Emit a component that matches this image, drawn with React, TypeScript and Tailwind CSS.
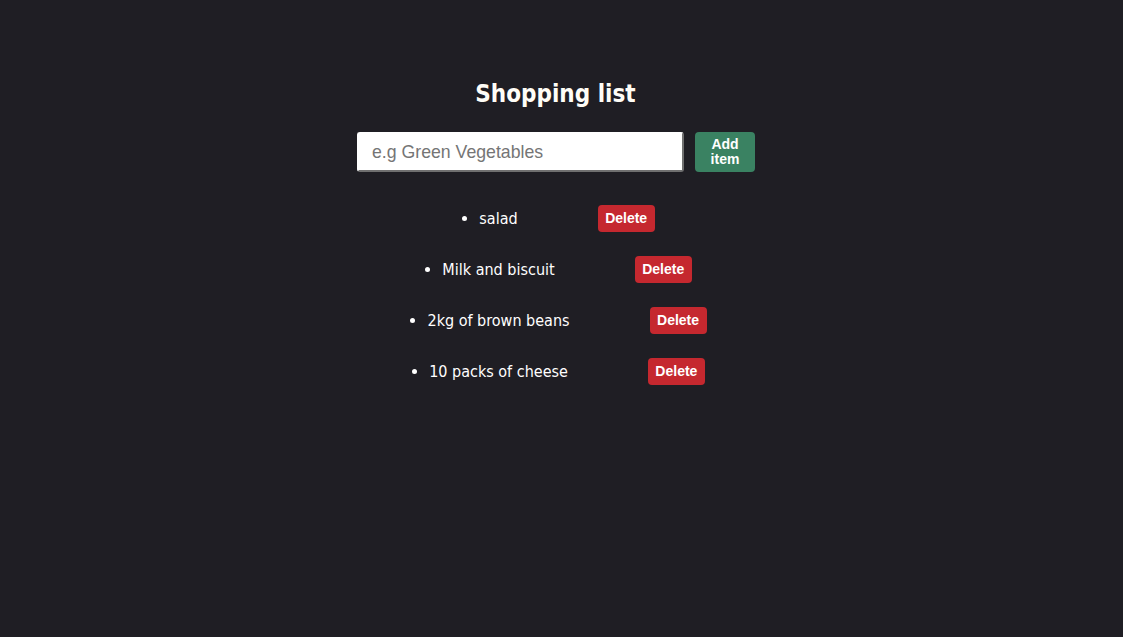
import React from 'react';

const items: string[] = ['salad', 'Milk and biscuit', '2kg of brown beans', '10 packs of cheese'];

export default function App() {
  return (
    <div className="min-h-[637px] w-full bg-[#1f1e24] text-white" style={{ fontFamily: '"DejaVu Sans Condensed", "DejaVu Sans", sans-serif' }}>
      <div className="flex flex-col items-center pt-[78px]">
        <h1 className="pr-[12px] text-[24px] font-bold leading-8 text-[#fffdf7]">Shopping list</h1>

        <form
          className="mt-[22px] flex items-center gap-[11px] pr-[11px] font-['Liberation_Sans',Arial,sans-serif]"
          onSubmit={(e) => e.preventDefault()}
        >
          <input
            type="text"
            placeholder="e.g Green Vegetables"
            className="h-[40px] w-[327px] rounded-[3px] border-2 border-t-white border-l-white border-b-[#707070] border-r-[#707070] bg-white pl-[13px] text-[17.7px] text-black outline-none placeholder:text-[#757575]"
          />
          <button
            type="submit"
            className="h-[40px] w-[60px] rounded-[4px] bg-[#3a8262] text-[14px] font-bold leading-[15px] text-white"
          >
            Add
            <br />
            item
          </button>
        </form>

        <ul className="mt-[21px] flex flex-col">
          {items.map((item) => (
            <li key={item} className="flex h-[51px] items-center justify-center pr-[6px] text-[16px]">
              <span className="mr-[12px] h-[5px] w-[5px] rounded-full bg-white" />
              <span>{item}</span>
              <button className="ml-[80px] h-[27px] w-[57px] rounded-[4px] bg-[#c5282f] font-['Liberation_Sans',Arial,sans-serif] text-[14px] font-bold text-white">
                Delete
              </button>
            </li>
          ))}
        </ul>
      </div>
    </div>
  );
}
